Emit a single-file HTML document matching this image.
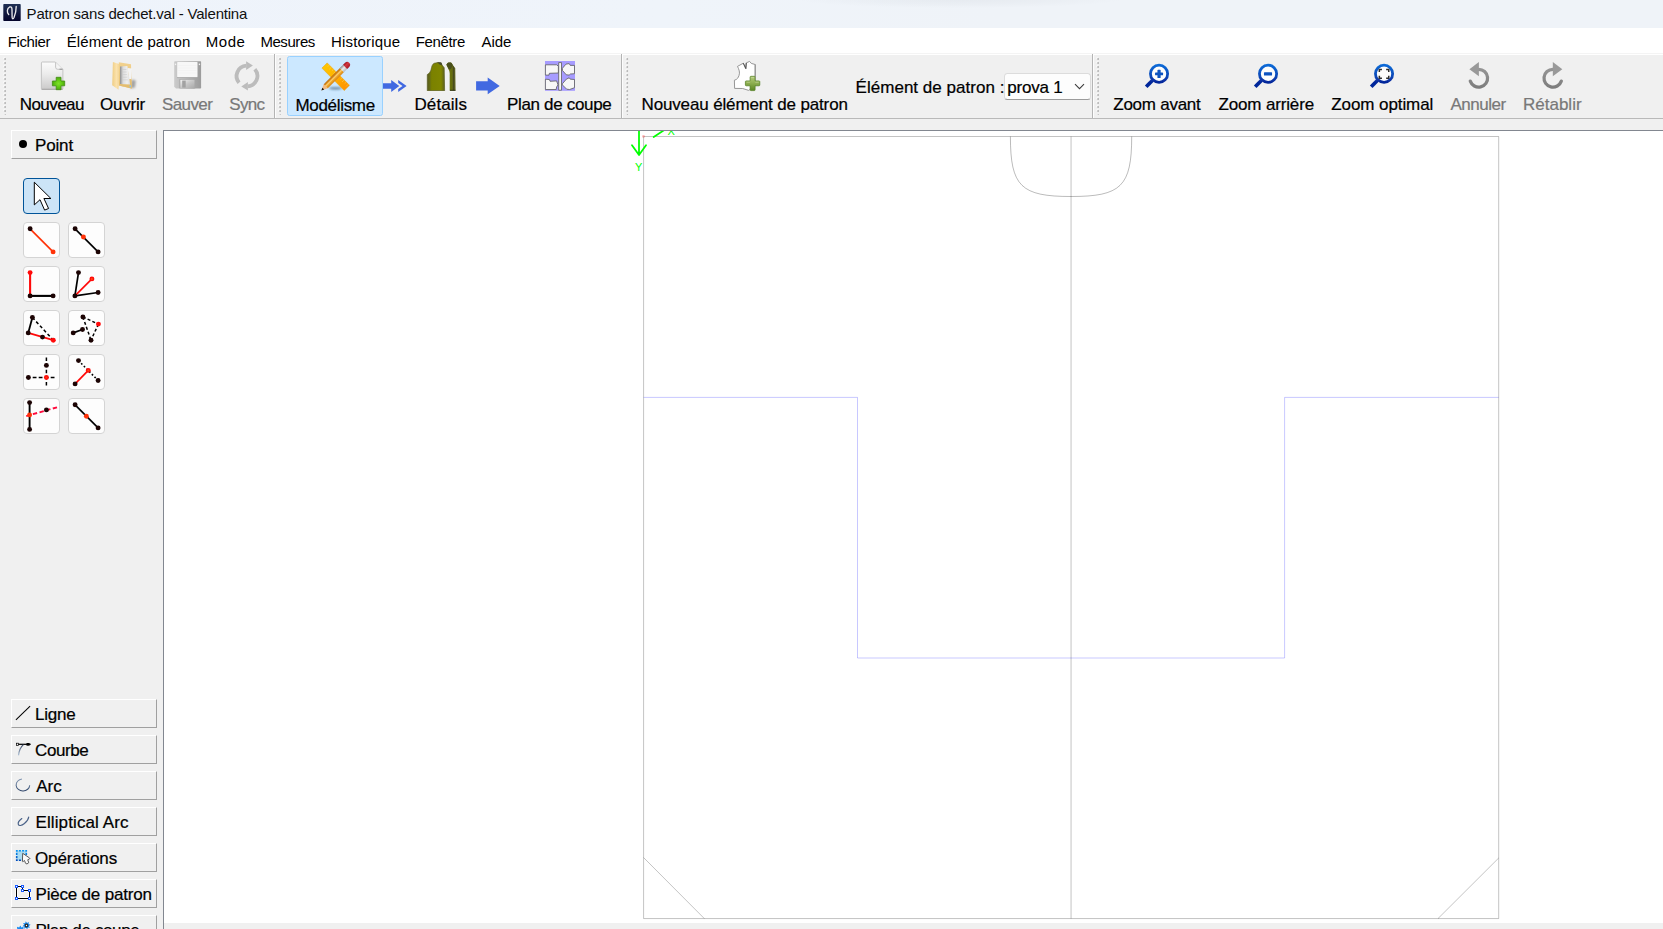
<!DOCTYPE html>
<html lang="fr">
<head>
<meta charset="utf-8">
<title>Patron sans dechet.val - Valentina</title>
<style>
*{box-sizing:border-box;margin:0;padding:0}
html,body{width:1663px;height:929px;overflow:hidden;background:#f0f0f0;font-family:"Liberation Sans","DejaVu Sans",sans-serif;color:#000}
.tx{position:absolute;line-height:24px;white-space:nowrap;z-index:5}
.b{-webkit-text-stroke:0.22px currentColor}
.dis{color:#787878}
svg{position:absolute;overflow:visible}
#title{position:absolute;left:0;top:0;width:1663px;height:28px;background:radial-gradient(ellipse 165px 9px at 960px -1px,rgba(110,118,130,0.075),rgba(110,118,130,0.035) 60%,rgba(110,118,130,0) 100%),linear-gradient(90deg,#eef3fb 0,#eff4fa 40%,#eff3f8 60%,#eff3f8 100%)}
#menubar{position:absolute;left:0;top:28px;width:1663px;height:25px;background:#fff}
#toolbar{position:absolute;left:0;top:53px;width:1663px;height:66px;background:linear-gradient(180deg,#f4f4f4 0,#f4f4f4 1px,#fff 1px,#fff 2px,#f0f0f0 2px);border-bottom:1px solid #b9b9b9}
.handle{position:absolute;top:58px;height:57px;width:3px;background:repeating-linear-gradient(180deg,#bdbdbd 0,#bdbdbd 1px,#f7f7f7 1px,#f7f7f7 2px,#f0f0f0 2px,#f0f0f0 3px)}
.sep{position:absolute;top:56px;height:61px;width:2px;border-left:1px solid #c3c3c3;border-right:1px solid #fbfbfb}
.chk{position:absolute;background:#cce8ff;border:1px solid #99d1ff;border-radius:2.5px}
.combo{position:absolute;background:#fdfdfd;border:1px solid #dcdcdc;border-bottom-color:#9c9c9c;border-radius:3.5px}
.tab{position:absolute;left:11px;width:146px;height:29px;background:#f0f0f0;border-top:1px solid #fff;border-left:1px solid #fff;border-right:1px solid #a0a0a0;border-bottom:1px solid #a0a0a0}
.dot{position:absolute;left:18.6px;top:139.7px;width:8.6px;height:8.6px;border-radius:50%;background:#000}
.tool{position:absolute;width:37px;height:36px;border:1px solid #d4d4d4;border-radius:4px;background:#fdfdfd}
.tool.sel{border-color:#005499;background:#cce4f7}
#canvas{position:absolute;left:163px;top:130px;width:1500px;height:793px;background:#fff;border-left:1px solid #828790;border-top:1px solid #828790}
#cvl{position:absolute;left:163px;top:923px;width:1px;height:6px;background:#828790}
</style>
</head>
<body>
<div id="title"></div>
<svg style="left:0;top:0;z-index:4" width="28" height="28" viewBox="0 0 28 28">
<defs><linearGradient id="lg" x1="0" y1="0" x2="0" y2="1"><stop offset="0" stop-color="#1e2f54"/><stop offset="1" stop-color="#04042c"/></linearGradient></defs>
<rect x="3.3" y="4" width="17.4" height="17" rx="0.8" fill="url(#lg)"/>
<path d="M8.7 14.5C6.7 12.5 6.9 8.4 9.6 7C11.5 6.3 12 7.8 12 10L12.1 17.3C12.2 19.2 13.2 19.2 14 17.5C15.5 14 16.2 10.2 16.2 6.5" fill="none" stroke="#e9e9ec" stroke-width="1.35" stroke-linecap="round" stroke-linejoin="round"/>
</svg>
<span class="tx " style="left:26.6px;top:2px;font-size:15px;letter-spacing:-0.2px;color:#101010">Patron sans dechet.val - Valentina</span>
<div id="menubar"></div>
<span class="tx " style="left:7.75px;top:30px;font-size:15px;letter-spacing:-0.375px">Fichier</span>
<span class="tx " style="left:66.8px;top:30px;font-size:15px;letter-spacing:0.056px">Élément de patron</span>
<span class="tx " style="left:205.7px;top:30px;font-size:15px;letter-spacing:0.567px">Mode</span>
<span class="tx " style="left:260.4px;top:30px;font-size:15px;letter-spacing:-0.433px">Mesures</span>
<span class="tx " style="left:331.0px;top:30px;font-size:15px;letter-spacing:0.167px">Historique</span>
<span class="tx " style="left:415.7px;top:30px;font-size:15px;letter-spacing:-0.35px">Fenêtre</span>
<span class="tx " style="left:481.5px;top:30px;font-size:15px;letter-spacing:-0.033px">Aide</span>
<div id="toolbar"></div>
<svg style="left:0;top:54px;z-index:2" width="1663" height="66" viewBox="0 54 1663 66">
<circle cx="4.21" cy="58.15" r="0.95" fill="#fcfcfc"/>
<circle cx="4.21" cy="62.15" r="0.95" fill="#fcfcfc"/>
<circle cx="4.21" cy="66.15" r="0.95" fill="#fcfcfc"/>
<circle cx="4.21" cy="70.15" r="0.95" fill="#fcfcfc"/>
<circle cx="4.21" cy="74.15" r="0.95" fill="#fcfcfc"/>
<circle cx="4.21" cy="78.15" r="0.95" fill="#fcfcfc"/>
<circle cx="4.21" cy="82.15" r="0.95" fill="#fcfcfc"/>
<circle cx="4.21" cy="86.15" r="0.95" fill="#fcfcfc"/>
<circle cx="4.21" cy="90.15" r="0.95" fill="#fcfcfc"/>
<circle cx="4.21" cy="94.15" r="0.95" fill="#fcfcfc"/>
<circle cx="4.21" cy="98.15" r="0.95" fill="#fcfcfc"/>
<circle cx="4.21" cy="102.15" r="0.95" fill="#fcfcfc"/>
<circle cx="4.21" cy="106.15" r="0.95" fill="#fcfcfc"/>
<circle cx="4.21" cy="110.15" r="0.95" fill="#fcfcfc"/>
<ellipse cx="5.11" cy="59.05" rx="0.95" ry="0.8" fill="#999"/>
<ellipse cx="5.11" cy="63.05" rx="0.95" ry="0.8" fill="#999"/>
<ellipse cx="5.11" cy="67.05" rx="0.95" ry="0.8" fill="#999"/>
<ellipse cx="5.11" cy="71.05" rx="0.95" ry="0.8" fill="#999"/>
<ellipse cx="5.11" cy="75.05" rx="0.95" ry="0.8" fill="#999"/>
<ellipse cx="5.11" cy="79.05" rx="0.95" ry="0.8" fill="#999"/>
<ellipse cx="5.11" cy="83.05" rx="0.95" ry="0.8" fill="#999"/>
<ellipse cx="5.11" cy="87.05" rx="0.95" ry="0.8" fill="#999"/>
<ellipse cx="5.11" cy="91.05" rx="0.95" ry="0.8" fill="#999"/>
<ellipse cx="5.11" cy="95.05" rx="0.95" ry="0.8" fill="#999"/>
<ellipse cx="5.11" cy="99.05" rx="0.95" ry="0.8" fill="#999"/>
<ellipse cx="5.11" cy="103.05" rx="0.95" ry="0.8" fill="#999"/>
<ellipse cx="5.11" cy="107.05" rx="0.95" ry="0.8" fill="#999"/>
<ellipse cx="5.11" cy="111.05" rx="0.95" ry="0.8" fill="#999"/>
<circle cx="5.26" cy="114.5" r="0.6" fill="#b4b4b4"/>
<circle cx="279.15" cy="58.15" r="0.95" fill="#fcfcfc"/>
<circle cx="279.15" cy="62.15" r="0.95" fill="#fcfcfc"/>
<circle cx="279.15" cy="66.15" r="0.95" fill="#fcfcfc"/>
<circle cx="279.15" cy="70.15" r="0.95" fill="#fcfcfc"/>
<circle cx="279.15" cy="74.15" r="0.95" fill="#fcfcfc"/>
<circle cx="279.15" cy="78.15" r="0.95" fill="#fcfcfc"/>
<circle cx="279.15" cy="82.15" r="0.95" fill="#fcfcfc"/>
<circle cx="279.15" cy="86.15" r="0.95" fill="#fcfcfc"/>
<circle cx="279.15" cy="90.15" r="0.95" fill="#fcfcfc"/>
<circle cx="279.15" cy="94.15" r="0.95" fill="#fcfcfc"/>
<circle cx="279.15" cy="98.15" r="0.95" fill="#fcfcfc"/>
<circle cx="279.15" cy="102.15" r="0.95" fill="#fcfcfc"/>
<circle cx="279.15" cy="106.15" r="0.95" fill="#fcfcfc"/>
<circle cx="279.15" cy="110.15" r="0.95" fill="#fcfcfc"/>
<ellipse cx="280.05" cy="59.05" rx="0.95" ry="0.8" fill="#999"/>
<ellipse cx="280.05" cy="63.05" rx="0.95" ry="0.8" fill="#999"/>
<ellipse cx="280.05" cy="67.05" rx="0.95" ry="0.8" fill="#999"/>
<ellipse cx="280.05" cy="71.05" rx="0.95" ry="0.8" fill="#999"/>
<ellipse cx="280.05" cy="75.05" rx="0.95" ry="0.8" fill="#999"/>
<ellipse cx="280.05" cy="79.05" rx="0.95" ry="0.8" fill="#999"/>
<ellipse cx="280.05" cy="83.05" rx="0.95" ry="0.8" fill="#999"/>
<ellipse cx="280.05" cy="87.05" rx="0.95" ry="0.8" fill="#999"/>
<ellipse cx="280.05" cy="91.05" rx="0.95" ry="0.8" fill="#999"/>
<ellipse cx="280.05" cy="95.05" rx="0.95" ry="0.8" fill="#999"/>
<ellipse cx="280.05" cy="99.05" rx="0.95" ry="0.8" fill="#999"/>
<ellipse cx="280.05" cy="103.05" rx="0.95" ry="0.8" fill="#999"/>
<ellipse cx="280.05" cy="107.05" rx="0.95" ry="0.8" fill="#999"/>
<ellipse cx="280.05" cy="111.05" rx="0.95" ry="0.8" fill="#999"/>
<circle cx="280.20" cy="114.5" r="0.6" fill="#b4b4b4"/>
<circle cx="626.35" cy="58.15" r="0.95" fill="#fcfcfc"/>
<circle cx="626.35" cy="62.15" r="0.95" fill="#fcfcfc"/>
<circle cx="626.35" cy="66.15" r="0.95" fill="#fcfcfc"/>
<circle cx="626.35" cy="70.15" r="0.95" fill="#fcfcfc"/>
<circle cx="626.35" cy="74.15" r="0.95" fill="#fcfcfc"/>
<circle cx="626.35" cy="78.15" r="0.95" fill="#fcfcfc"/>
<circle cx="626.35" cy="82.15" r="0.95" fill="#fcfcfc"/>
<circle cx="626.35" cy="86.15" r="0.95" fill="#fcfcfc"/>
<circle cx="626.35" cy="90.15" r="0.95" fill="#fcfcfc"/>
<circle cx="626.35" cy="94.15" r="0.95" fill="#fcfcfc"/>
<circle cx="626.35" cy="98.15" r="0.95" fill="#fcfcfc"/>
<circle cx="626.35" cy="102.15" r="0.95" fill="#fcfcfc"/>
<circle cx="626.35" cy="106.15" r="0.95" fill="#fcfcfc"/>
<circle cx="626.35" cy="110.15" r="0.95" fill="#fcfcfc"/>
<ellipse cx="627.25" cy="59.05" rx="0.95" ry="0.8" fill="#999"/>
<ellipse cx="627.25" cy="63.05" rx="0.95" ry="0.8" fill="#999"/>
<ellipse cx="627.25" cy="67.05" rx="0.95" ry="0.8" fill="#999"/>
<ellipse cx="627.25" cy="71.05" rx="0.95" ry="0.8" fill="#999"/>
<ellipse cx="627.25" cy="75.05" rx="0.95" ry="0.8" fill="#999"/>
<ellipse cx="627.25" cy="79.05" rx="0.95" ry="0.8" fill="#999"/>
<ellipse cx="627.25" cy="83.05" rx="0.95" ry="0.8" fill="#999"/>
<ellipse cx="627.25" cy="87.05" rx="0.95" ry="0.8" fill="#999"/>
<ellipse cx="627.25" cy="91.05" rx="0.95" ry="0.8" fill="#999"/>
<ellipse cx="627.25" cy="95.05" rx="0.95" ry="0.8" fill="#999"/>
<ellipse cx="627.25" cy="99.05" rx="0.95" ry="0.8" fill="#999"/>
<ellipse cx="627.25" cy="103.05" rx="0.95" ry="0.8" fill="#999"/>
<ellipse cx="627.25" cy="107.05" rx="0.95" ry="0.8" fill="#999"/>
<ellipse cx="627.25" cy="111.05" rx="0.95" ry="0.8" fill="#999"/>
<circle cx="627.40" cy="114.5" r="0.6" fill="#b4b4b4"/>
<circle cx="1097.21" cy="58.15" r="0.95" fill="#fcfcfc"/>
<circle cx="1097.21" cy="62.15" r="0.95" fill="#fcfcfc"/>
<circle cx="1097.21" cy="66.15" r="0.95" fill="#fcfcfc"/>
<circle cx="1097.21" cy="70.15" r="0.95" fill="#fcfcfc"/>
<circle cx="1097.21" cy="74.15" r="0.95" fill="#fcfcfc"/>
<circle cx="1097.21" cy="78.15" r="0.95" fill="#fcfcfc"/>
<circle cx="1097.21" cy="82.15" r="0.95" fill="#fcfcfc"/>
<circle cx="1097.21" cy="86.15" r="0.95" fill="#fcfcfc"/>
<circle cx="1097.21" cy="90.15" r="0.95" fill="#fcfcfc"/>
<circle cx="1097.21" cy="94.15" r="0.95" fill="#fcfcfc"/>
<circle cx="1097.21" cy="98.15" r="0.95" fill="#fcfcfc"/>
<circle cx="1097.21" cy="102.15" r="0.95" fill="#fcfcfc"/>
<circle cx="1097.21" cy="106.15" r="0.95" fill="#fcfcfc"/>
<circle cx="1097.21" cy="110.15" r="0.95" fill="#fcfcfc"/>
<ellipse cx="1098.11" cy="59.05" rx="0.95" ry="0.8" fill="#999"/>
<ellipse cx="1098.11" cy="63.05" rx="0.95" ry="0.8" fill="#999"/>
<ellipse cx="1098.11" cy="67.05" rx="0.95" ry="0.8" fill="#999"/>
<ellipse cx="1098.11" cy="71.05" rx="0.95" ry="0.8" fill="#999"/>
<ellipse cx="1098.11" cy="75.05" rx="0.95" ry="0.8" fill="#999"/>
<ellipse cx="1098.11" cy="79.05" rx="0.95" ry="0.8" fill="#999"/>
<ellipse cx="1098.11" cy="83.05" rx="0.95" ry="0.8" fill="#999"/>
<ellipse cx="1098.11" cy="87.05" rx="0.95" ry="0.8" fill="#999"/>
<ellipse cx="1098.11" cy="91.05" rx="0.95" ry="0.8" fill="#999"/>
<ellipse cx="1098.11" cy="95.05" rx="0.95" ry="0.8" fill="#999"/>
<ellipse cx="1098.11" cy="99.05" rx="0.95" ry="0.8" fill="#999"/>
<ellipse cx="1098.11" cy="103.05" rx="0.95" ry="0.8" fill="#999"/>
<ellipse cx="1098.11" cy="107.05" rx="0.95" ry="0.8" fill="#999"/>
<ellipse cx="1098.11" cy="111.05" rx="0.95" ry="0.8" fill="#999"/>
<circle cx="1098.26" cy="114.5" r="0.6" fill="#b4b4b4"/>
<rect x="274" y="54" width="1" height="64" fill="#b4b4b4"/><rect x="275" y="55" width="1" height="63" fill="#fdfdfd"/>
<rect x="621" y="54" width="1" height="64" fill="#b4b4b4"/><rect x="622" y="55" width="1" height="63" fill="#fdfdfd"/>
<rect x="1092" y="54" width="1" height="64" fill="#b4b4b4"/><rect x="1093" y="55" width="1" height="63" fill="#fdfdfd"/>
</svg>
<div class="chk" style="left:287px;top:56px;width:96px;height:60px"></div>
<div class="combo" style="left:1004px;top:73px;width:87px;height:27px"></div>
<span class="tx  b" style="left:19.7px;top:93px;font-size:17px;letter-spacing:-0.55px">Nouveau</span>
<span class="tx  b" style="left:100.0px;top:93px;font-size:17px;letter-spacing:-0.24px">Ouvrir</span>
<span class="tx dis b" style="left:162.0px;top:93px;font-size:17px;letter-spacing:-0.6px">Sauver</span>
<span class="tx dis b" style="left:229.3px;top:93px;font-size:17px;letter-spacing:-0.667px">Sync</span>
<span class="tx  b" style="left:295.4px;top:94px;font-size:17px;letter-spacing:-0.3px">Modélisme</span>
<span class="tx  b" style="left:414.5px;top:93px;font-size:17px;letter-spacing:0.083px">Détails</span>
<span class="tx  b" style="left:507.0px;top:93px;font-size:17px;letter-spacing:-0.333px">Plan de coupe</span>
<span class="tx  b" style="left:641.5px;top:93px;font-size:17px;letter-spacing:-0.142px">Nouveau élément de patron</span>
<span class="tx  b" style="left:855.6px;top:76px;font-size:17px;letter-spacing:0.022px">Élément de patron :</span>
<span class="tx  b" style="left:1007.2px;top:76px;font-size:17px;letter-spacing:-0.2px">prova 1</span>
<span class="tx  b" style="left:1113.3px;top:93px;font-size:17px;letter-spacing:-0.256px">Zoom avant</span>
<span class="tx  b" style="left:1218.5px;top:93px;font-size:17px;letter-spacing:-0.155px">Zoom arrière</span>
<span class="tx  b" style="left:1331.3px;top:93px;font-size:17px;letter-spacing:-0.091px">Zoom optimal</span>
<span class="tx dis b" style="left:1450.5px;top:93px;font-size:17px;letter-spacing:-0.483px">Annuler</span>
<span class="tx dis b" style="left:1523.0px;top:93px;font-size:17px;letter-spacing:0.0px">Rétablir</span>
<svg style="left:30px;top:56px;z-index:4" width="50" height="40" viewBox="30 56 50 40">
<defs>
<linearGradient id="docg" x1="0" y1="0" x2="0" y2="1"><stop offset="0" stop-color="#fcfcfc"/><stop offset="0.45" stop-color="#ebebeb"/><stop offset="1" stop-color="#cbcaca"/></linearGradient>
<radialGradient id="plusg" cx="0.5" cy="0.5" r="0.6"><stop offset="0" stop-color="#7fe02a"/><stop offset="0.5" stop-color="#5fc812"/><stop offset="1" stop-color="#459412"/></radialGradient>
</defs>
<path d="M42.3 62H55.3L62.9 69.6V88.4Q62.9 89.3 62 89.3H42.3Q41.4 89.3 41.4 88.4V62.9Q41.4 62 42.3 62Z" fill="url(#docg)" stroke="#c4c4c4" stroke-width="1"/>
<path d="M41.6 89.3H62.6" stroke="#a9a8a8" stroke-width="1.1"/>
<path d="M55.6 62.4V67.2Q55.6 69.3 57.8 69.3H62.6" fill="#f4f4f4" stroke="#bdbdbd" stroke-width="0.9"/>
<path d="M59.5 69.2h3" stroke="#8c8c8c" stroke-width="0.9"/>
<path d="M56.2 77.3H61V81H64.7V85.8H61V89.7H56.2V85.8H52.4V81H56.2Z" fill="url(#plusg)" stroke="#438f12" stroke-width="0.8" stroke-linejoin="round"/>
</svg>
<svg style="left:100px;top:56px;z-index:4" width="50" height="40" viewBox="100 56 50 40">
<defs>
<linearGradient id="fo1" x1="0" y1="0" x2="1" y2="0"><stop offset="0" stop-color="#efcd83"/><stop offset="0.6" stop-color="#fbe2ad"/><stop offset="1" stop-color="#f3d594"/></linearGradient>
<linearGradient id="fo2" x1="0" y1="0" x2="0" y2="1"><stop offset="0" stop-color="#f2d28f"/><stop offset="1" stop-color="#e3bb6a"/></linearGradient>
<linearGradient id="fo3" x1="0" y1="0" x2="1" y2="0"><stop offset="0" stop-color="#8e8e8e"/><stop offset="0.3" stop-color="#dcdcdc"/><stop offset="0.7" stop-color="#efefef"/><stop offset="1" stop-color="#d8d8d8"/></linearGradient>
<filter id="bl1" x="-20%" y="-20%" width="140%" height="140%"><feGaussianBlur stdDeviation="0.35"/></filter>
<filter id="bl2" x="-50%" y="-50%" width="200%" height="200%"><feGaussianBlur stdDeviation="1.1"/></filter>
</defs>
<path d="M131.5 79.5L135.8 80.6L135 87.5L130.5 88.6Z" fill="#000" fill-opacity="0.33" filter="url(#bl2)"/>
<g filter="url(#bl1)">
<path d="M118.8 62.3L131 64.3L131.7 88.6L118.8 85.6Z" fill="url(#fo2)"/>
<path d="M127.6 67.9L132 68.5L131.1 79L129 79Z" fill="#f3f3f3"/>
<path d="M120 66.4L127.4 66L130.2 84.6L120 84.1Z" fill="url(#fo3)"/>
<path d="M121.8 69.5h4.6M121.9 72h4.8M122 74.6h5M122.1 77.2h5.3M122.2 79.8h5.6" stroke="#c9c9c9" stroke-width="0.6"/>
<path d="M119.2 85.2L130.6 87.4L130.4 80L131.4 79.5L131.7 88.6L118.8 85.6Z" fill="#e4bd70"/>
<path d="M129.6 85.2h1.4v2h-1.4z" fill="#8cc4ea"/>
<path d="M112.9 62L119.2 64V79L118.5 89.8L112.2 85.2Z" fill="url(#fo1)"/>
</g>
</svg>
<svg style="left:165px;top:56px;z-index:4" width="50" height="40" viewBox="165 56 50 40">
<defs>
<linearGradient id="sv1" x1="0" y1="0" x2="1" y2="0"><stop offset="0" stop-color="#cbcbcb"/><stop offset="0.5" stop-color="#b4b4b4"/><stop offset="1" stop-color="#9b9b9b"/></linearGradient>
<linearGradient id="sv2" x1="0" y1="0" x2="1" y2="1"><stop offset="0" stop-color="#f4f4f4"/><stop offset="0.5" stop-color="#c6c6c6"/><stop offset="1" stop-color="#a9a9a9"/></linearGradient>
<filter id="bl3" x="-20%" y="-20%" width="140%" height="140%"><feGaussianBlur stdDeviation="0.3"/></filter>
</defs>
<g filter="url(#bl3)">
<path d="M175 61.3H200.4Q201.1 61.3 201.1 62V87.7Q201.1 88.4 200.4 88.4H176L174.2 86.8V62Q174.2 61.3 175 61.3Z" fill="url(#sv1)"/>
<rect x="177.2" y="61.9" width="20.3" height="15.3" rx="0.6" fill="#f7f7f7"/>
<path d="M178 65.5h18.5M178 68h18.5M178 70.5h18.5M178 73h18.5" stroke="#efefef" stroke-width="0.5"/>
<path d="M177 77.6H197.6" stroke="#a8a8a8" stroke-width="0.8"/>
<rect x="179.4" y="79.2" width="16" height="9.2" fill="#a6a6a6"/>
<rect x="180.3" y="79.8" width="14.2" height="8.6" fill="url(#sv2)"/>
<rect x="182.2" y="80.6" width="3.5" height="7" fill="#a2a2a2"/>
<rect x="174.9" y="63.6" width="1.3" height="1.5" fill="#f2f2f2"/>
<rect x="198.8" y="63.6" width="1.3" height="1.5" fill="#f2f2f2"/>
</g>
</svg>
<svg style="left:222px;top:56px;z-index:4" width="50" height="40" viewBox="222 56 50 40">
<defs><filter id="bl4" x="-20%" y="-20%" width="140%" height="140%"><feGaussianBlur stdDeviation="0.3"/></filter></defs>
<g filter="url(#bl4)" fill="#bcbcbc">
<path d="M239.03 82.68A10.4 10.4 0 0 1 246.27 65.63" fill="none" stroke="#bcbcbc" stroke-width="3.8"/>
<path d="M254.85 69.18A10.4 10.4 0 0 1 247.73 86.37" fill="none" stroke="#bcbcbc" stroke-width="3.8"/>
<path d="M246.1 61.3L252.9 65.5L246.1 69.9Z"/>
<path d="M247.9 81.9L241.3 86.4L247.9 90.6Z"/>
</g>
</svg>
<svg style="left:310px;top:57px;z-index:4" width="50" height="39" viewBox="310 57 50 39">
<defs>
<linearGradient id="rul" x1="0" y1="0" x2="1" y2="0"><stop offset="0" stop-color="#ffc600"/><stop offset="0.45" stop-color="#ffb400"/><stop offset="1" stop-color="#ff9200"/></linearGradient>
<linearGradient id="pen" x1="0" y1="0" x2="0" y2="1"><stop offset="0" stop-color="#b86a10"/><stop offset="0.25" stop-color="#d98a1c"/><stop offset="0.45" stop-color="#fcd57c"/><stop offset="0.62" stop-color="#f2ac34"/><stop offset="1" stop-color="#d7820c"/></linearGradient>
<linearGradient id="fer" x1="0" y1="0" x2="0" y2="1"><stop offset="0" stop-color="#8a8a8a"/><stop offset="0.45" stop-color="#ededed"/><stop offset="1" stop-color="#b8b8b8"/></linearGradient>
<linearGradient id="era" x1="0" y1="0" x2="0" y2="1"><stop offset="0" stop-color="#a01522"/><stop offset="0.4" stop-color="#d3363f"/><stop offset="1" stop-color="#a81a26"/></linearGradient>
<filter id="bl5" x="-20%" y="-20%" width="140%" height="140%"><feGaussianBlur stdDeviation="0.3"/></filter>
<filter id="bl6" x="-50%" y="-100%" width="200%" height="300%"><feGaussianBlur stdDeviation="1.2"/></filter>
</defs>
<ellipse cx="335.5" cy="88.3" rx="6.5" ry="1.4" fill="#24415f" fill-opacity="0.55" filter="url(#bl6)"/>
<g filter="url(#bl5)">
<g transform="translate(327.2 62.9) rotate(45.2)">
<rect x="0" y="0" width="31.6" height="7.4" fill="url(#rul)" stroke="#eb9d00" stroke-width="0.5"/>
<path d="M3 0v2.2M6 0v3M9 0v2.2M12 0v3M21 0v2.2M24 0v3M27 0v2.2M30 0v3" stroke="#ffd870" stroke-width="0.6" opacity="0.7"/>
</g>
<g transform="translate(321.4 90.6) rotate(-45)">
<path d="M0 0L6.3 -2.9V2.9Z" fill="#f2b983"/>
<path d="M0 0L2.7 -1.25V1.25Z" fill="#1a1208"/>
<rect x="6.2" y="-2.9" width="22.9" height="5.8" fill="url(#pen)"/>
<rect x="28.9" y="-2.9" width="4.8" height="5.8" fill="url(#fer)"/>
<path d="M33.5 -2.9H36.4Q39.3 -2.9 39.3 0Q39.3 2.9 36.4 2.9H33.5Z" fill="url(#era)"/>
</g>
</g>
</svg>
<svg style="left:383px;top:76px;z-index:4" width="28" height="20" viewBox="383 76 28 20">
<path d="M383 83.3H391.2V80.1L399.3 86L391.2 92V88.7H383Z" fill="#4169e1"/>
<path d="M398.2 80.1L406.6 86L398.2 92V89.1L402.5 86L398.2 82.9Z" fill="#4169e1"/>
</svg>
<svg style="left:420px;top:58px;z-index:4" width="44" height="38" viewBox="420 58 44 38">
<defs>
<linearGradient id="dt1" gradientUnits="userSpaceOnUse" x1="427" y1="0" x2="445" y2="0"><stop offset="0" stop-color="#55591c"/><stop offset="0.14" stop-color="#646a14"/><stop offset="0.26" stop-color="#7a8104"/><stop offset="0.78" stop-color="#808600"/><stop offset="0.9" stop-color="#6a6e14"/><stop offset="1" stop-color="#5c5e22"/></linearGradient>
<linearGradient id="dt2" gradientUnits="userSpaceOnUse" x1="449.5" y1="0" x2="456" y2="0"><stop offset="0" stop-color="#6a7212"/><stop offset="0.42" stop-color="#646c10"/><stop offset="0.62" stop-color="#474b1a"/><stop offset="0.8" stop-color="#5c6024"/><stop offset="1" stop-color="#8b8f55"/></linearGradient>
<filter id="bl7" x="-20%" y="-20%" width="140%" height="140%"><feGaussianBlur stdDeviation="0.38"/></filter>
</defs>
<g filter="url(#bl7)">
<path d="M427.3 90.7V74.6C429.6 73.2 430.6 71.4 431.2 69.2C431.8 66.8 432 64.4 434.2 63.3L438.2 62.5L441.1 62.9L442 65L444.2 67.7L444.6 90.7Z" fill="url(#dt1)" stroke="#595c22" stroke-width="0.7"/>
<path d="M437.2 62.2L441.4 62.6L442.2 65.4L439.6 64.4Z" fill="#45472a"/>
<path d="M446.4 64.8C447 63.4 447.8 62.7 448.6 62.5H450.8C452 63.2 452.4 64.2 452.8 65.1L455.3 68.2L455.7 90.7H449.7V73.4C449.6 71.4 449.2 70.2 448.4 68.9Z" fill="url(#dt2)"/>
<path d="M446.4 64.8C447 63.4 447.8 62.7 448.6 62.5H450.8C452 63.2 452.4 64.2 452.8 65.1L451 69L449 69.4Z" fill="#4a4f1c"/>
<path d="M450 90.3h5.4" stroke="#30331a" stroke-width="0.9"/>
<path d="M427 91.5h17.8M449.4 91.5h6.6" stroke="#fbfbfb" stroke-width="0.7"/>
</g>
</svg>
<svg style="left:470px;top:56px;z-index:4" width="120" height="40" viewBox="470 56 120 40">
<path d="M476.1 81.3H487.7V77.6L499.7 86L487.7 94.3V90.6H476.1Z" fill="#4169e1"/>
<rect x="545" y="61" width="30" height="29.8" fill="#a79cff"/>
<g fill="#f7f7f7" stroke="#5c5c5c" stroke-width="0.8" stroke-linejoin="round">
<path d="M545.4 64.8 L556.6 64.8 L558.4 66.2 L558.4 73.0 L549.4 73.3 L549.0 75.1 L545.4 75.1Z"/>
<path d="M545.4 79.2 L549.4 79.5 L550.1 81.3 L556.6 80.9 L558.0 84.9 L556.6 87.0 L556.2 89.5 L545.4 89.5Z"/>
<path d="M558.7 62.6 L561.5 62.6 L561.5 90.2 L558.7 90.2Z"/>
<path d="M562.4 68.3 L566.0 64.1 L569.2 63.6 L570.3 65.4 L574.5 65.4 L574.5 73.7 L570.3 74.0 L569.2 75.1 L566.3 74.8 L562.4 70.4Z"/>
<path d="M562.4 83.8 L566.3 79.2 L569.2 77.8 L570.3 79.2 L574.5 79.5 L574.5 87.7 L569.6 89.5 L566.7 89.2 L562.4 84.9Z"/>
</g>
</svg>
<svg style="left:722px;top:56px;z-index:4" width="50" height="40" viewBox="722 56 50 40">
<defs>
<linearGradient id="pp1" x1="0" y1="0" x2="0" y2="1"><stop offset="0" stop-color="#b4cb7c"/><stop offset="0.45" stop-color="#8fb052"/><stop offset="1" stop-color="#5a8622"/></linearGradient>
<filter id="bl8" x="-20%" y="-20%" width="140%" height="140%"><feGaussianBlur stdDeviation="0.3"/></filter>
</defs>
<g filter="url(#bl8)">
<path d="M737.5 66.4L743.3 63.2L745.8 68.6L746.3 62.9L749.6 61.4L751.3 63.4L755.2 64.5V86L748.7 90.4L742.7 88.5L734.6 88.4L734.4 80.2C737.3 79.6 738.2 77.6 739 75.5C740.2 72.4 739 69.4 737.5 66.4Z" fill="#fff" stroke="#8c8c8c" stroke-width="0.9" stroke-linejoin="round"/>
<path d="M743.3 63.2L745.8 68.6L746.3 62.9" fill="none" stroke="#4a4a4a" stroke-width="0.9" stroke-linejoin="round"/>
<path d="M755.3 64.6V77" stroke="#9b9b9b" stroke-width="1.3"/>
<path d="M750.9 76.3H754.3Q755.1 76.3 755.1 77.1V80.9H759Q759.8 80.9 759.8 81.7V85Q759.8 85.8 759 85.8H755.1V89.8Q755.1 90.6 754.3 90.6H750.9Q750.1 90.6 750.1 89.8V85.8H746.2Q745.4 85.8 745.4 85V81.7Q745.4 80.9 746.2 80.9H750.1V77.1Q750.1 76.3 750.9 76.3Z" fill="url(#pp1)" stroke="#507c20" stroke-width="0.7"/>
<path d="M751.2 77.6h2.8M746.6 82.2h3.4M755.3 82.2h3.4" stroke="#d4e2b0" stroke-width="0.6" opacity="0.85"/>
</g>
</svg>
<svg style="left:1070px;top:78px;z-index:6" width="20" height="16" viewBox="1070 78 20 16"><path d="M1075 84.2L1079.5 88.7L1084 84.2" fill="none" stroke="#3c3c3c" stroke-width="1.05"/></svg>
<svg style="left:1132px;top:56px;z-index:4" width="50" height="40" viewBox="1132 56 50 40">
<defs><linearGradient id="mgzoomin" gradientUnits="userSpaceOnUse" x1="0" y1="63" x2="0" y2="89"><stop offset="0" stop-color="#0a6fdc"/><stop offset="0.5" stop-color="#0a49b8"/><stop offset="0.75" stop-color="#06259a"/><stop offset="1" stop-color="#062a9c"/></linearGradient>
<filter id="blmzoomin" x="-20%" y="-20%" width="140%" height="140%"><feGaussianBlur stdDeviation="0.32"/></filter></defs>
<g filter="url(#blmzoomin)">
<path d="M1146.20 86.8L1152.60 80.2" stroke="url(#mgzoomin)" stroke-width="3.7" fill="none"/>
<circle cx="1159.05" cy="73.74" r="8.6" fill="#fdfdfd" stroke="url(#mgzoomin)" stroke-width="2.8"/>
<rect x="1155.05" y="72.54" width="8" height="2.7" rx="0.6" fill="#0a52c0"/><rect x="1157.45" y="69.79" width="3.2" height="8.2" rx="0.6" fill="#0a52c0"/>
</g>
</svg>
<svg style="left:1241px;top:56px;z-index:4" width="50" height="40" viewBox="1241 56 50 40">
<defs><linearGradient id="mgzoomout" gradientUnits="userSpaceOnUse" x1="0" y1="63" x2="0" y2="89"><stop offset="0" stop-color="#0a6fdc"/><stop offset="0.5" stop-color="#0a49b8"/><stop offset="0.75" stop-color="#06259a"/><stop offset="1" stop-color="#062a9c"/></linearGradient>
<filter id="blmzoomout" x="-20%" y="-20%" width="140%" height="140%"><feGaussianBlur stdDeviation="0.32"/></filter></defs>
<g filter="url(#blmzoomout)">
<path d="M1255.20 86.8L1261.60 80.2" stroke="url(#mgzoomout)" stroke-width="3.7" fill="none"/>
<circle cx="1268.05" cy="73.74" r="8.6" fill="#fdfdfd" stroke="url(#mgzoomout)" stroke-width="2.8"/>
<rect x="1263.95" y="72.24" width="8.1" height="3.3" rx="0.6" fill="#0a52c0"/>
</g>
</svg>
<svg style="left:1357px;top:56px;z-index:4" width="50" height="40" viewBox="1357 56 50 40">
<defs><linearGradient id="mgzoomfit" gradientUnits="userSpaceOnUse" x1="0" y1="63" x2="0" y2="89"><stop offset="0" stop-color="#0a6fdc"/><stop offset="0.5" stop-color="#0a49b8"/><stop offset="0.75" stop-color="#06259a"/><stop offset="1" stop-color="#062a9c"/></linearGradient>
<filter id="blmzoomfit" x="-20%" y="-20%" width="140%" height="140%"><feGaussianBlur stdDeviation="0.32"/></filter></defs>
<g filter="url(#blmzoomfit)">
<path d="M1371.20 86.8L1377.60 80.2" stroke="url(#mgzoomfit)" stroke-width="3.7" fill="none"/>
<circle cx="1384.05" cy="73.74" r="8.6" fill="#fdfdfd" stroke="url(#mgzoomfit)" stroke-width="2.8"/>
<path d="M1379.35 72.04V69.44H1381.95M1386.15 69.44H1388.75V72.04M1388.75 75.64V78.24H1386.15M1381.95 78.24H1379.35V75.64" stroke="#2e2e2e" stroke-width="1.5" fill="none"/>
</g>
</svg>
<svg style="left:1455px;top:56px;z-index:4" width="50" height="40" viewBox="1455 56 50 40">
<defs><linearGradient id="ugundo" gradientUnits="userSpaceOnUse" x1="0" y1="62" x2="0" y2="89"><stop offset="0" stop-color="#9d9d9d"/><stop offset="1" stop-color="#7b7b7b"/></linearGradient>
<filter id="bluundo" x="-20%" y="-20%" width="140%" height="140%"><feGaussianBlur stdDeviation="0.3"/></filter></defs>
<g filter="url(#bluundo)">
<path d="M1478.70 69.30A8.9 8.9 0 1 1 1470.28 81.10" fill="none" stroke="url(#ugundo)" stroke-width="3.25" stroke-linecap="round"/>
<path d="M1478.90 61.9L1469.40 69.35L1478.90 76.3Z" fill="#999"/>
</g>
</svg>
<svg style="left:1528px;top:56px;z-index:4" width="50" height="40" viewBox="1528 56 50 40">
<defs><linearGradient id="ugredo" gradientUnits="userSpaceOnUse" x1="0" y1="62" x2="0" y2="89"><stop offset="0" stop-color="#9d9d9d"/><stop offset="1" stop-color="#7b7b7b"/></linearGradient>
<filter id="bluredo" x="-20%" y="-20%" width="140%" height="140%"><feGaussianBlur stdDeviation="0.3"/></filter></defs>
<g filter="url(#bluredo)">
<path d="M1552.90 69.30A8.9 8.9 0 1 0 1561.32 81.10" fill="none" stroke="url(#ugredo)" stroke-width="3.25" stroke-linecap="round"/>
<path d="M1552.80 61.9L1562.30 69.35L1552.80 76.3Z" fill="#999"/>
</g>
</svg>
<div class="tab" style="top:130px"></div><i class="dot"></i>
<span class="tx  b" style="left:35.0px;top:134px;font-size:17px;letter-spacing:-0.15px">Point</span>
<div class="tool sel" style="left:23px;top:178px"></div>
<div class="tool" style="left:23px;top:222px"></div><div class="tool" style="left:68px;top:222px"></div>
<div class="tool" style="left:23px;top:266px"></div><div class="tool" style="left:68px;top:266px"></div>
<div class="tool" style="left:23px;top:310px"></div><div class="tool" style="left:68px;top:310px"></div>
<div class="tool" style="left:23px;top:354px"></div><div class="tool" style="left:68px;top:354px"></div>
<div class="tool" style="left:23px;top:398px"></div><div class="tool" style="left:68px;top:398px"></div>
<svg style="left:18px;top:174px;z-index:4" width="92" height="264" viewBox="18 174 92 264">
<path d="M34.3 182.2V204.9L40 199.7L44.6 210.1L48.6 208.5L43.9 198.5H50.9Z" fill="#fff" stroke="#000" stroke-width="1" stroke-linejoin="miter"/>
<path d="M30.1 228.8L53.1 251.9" stroke="#ff3208" stroke-width="1.7" fill="none"/>
<circle cx="30.1" cy="228.8" r="2.45" fill="#1c0404"/>
<circle cx="53.1" cy="251.9" r="2.45" fill="#ff3208"/>
<path d="M75.1 228.8L98.1 251.9" stroke="#000" stroke-width="1.7" fill="none"/>
<circle cx="75.1" cy="228.8" r="2.45" fill="#1c0404"/>
<circle cx="98.1" cy="251.9" r="2.45" fill="#1c0404"/>
<circle cx="83.4" cy="237" r="2.45" fill="#ff3208"/>
<path d="M30.1 272.6L30.1 295.9" stroke="#ff0a0a" stroke-width="2.1" fill="none"/>
<path d="M30.1 295.9L53.1 295.9" stroke="#000" stroke-width="2.1" fill="none"/>
<circle cx="30.1" cy="272.6" r="2.45" fill="#ff0a0a"/>
<circle cx="30.1" cy="295.9" r="2.45" fill="#1c0404"/>
<circle cx="53.1" cy="295.9" r="2.45" fill="#1c0404"/>
<path d="M74.9 295.9L78.5 272.6" stroke="#000" stroke-width="1.7" fill="none"/>
<path d="M74.9 295.9L98.1 292.5" stroke="#000" stroke-width="1.7" fill="none"/>
<path d="M74.9 295.9L91.9 278.9" stroke="#ff0a0a" stroke-width="1.7" fill="none"/>
<circle cx="78.5" cy="272.6" r="2.45" fill="#1c0404"/>
<circle cx="98.1" cy="292.5" r="2.45" fill="#1c0404"/>
<circle cx="74.9" cy="295.9" r="2.45" fill="#1c0404"/>
<circle cx="91.9" cy="278.9" r="2.45" fill="#ff0a0a"/>
<circle cx="91.9" cy="278.9" r="1" fill="#ff4a10"/>
<path d="M32.4 317.5L53.3 340.2" stroke="#000" stroke-width="1.5" fill="none" stroke-dasharray="3.2 2.4"/>
<path d="M32.4 317.5L28.2 332.9" stroke="#000" stroke-width="1.8" fill="none"/>
<path d="M28.2 332.9L53.3 340.2" stroke="#ff0a0a" stroke-width="1.8" fill="none"/>
<circle cx="32.4" cy="317.5" r="2.45" fill="#1c0404"/>
<circle cx="28.2" cy="332.9" r="2.45" fill="#1c0404"/>
<circle cx="42.5" cy="337.1" r="2.45" fill="#1c0404"/>
<circle cx="53.3" cy="340.2" r="2.45" fill="#ff0a0a"/>
<path d="M82.9 317L98.4 324.1" stroke="#000" stroke-width="1.5" fill="none" stroke-dasharray="3 2.2"/>
<path d="M98.4 324.1L91 340.2" stroke="#000" stroke-width="1.5" fill="none" stroke-dasharray="3 2.2"/>
<path d="M82.9 317L91 340.2" stroke="#000" stroke-width="1.5" fill="none" stroke-dasharray="3 2.2"/>
<path d="M73.2 332.9L82.5 329.5" stroke="#000" stroke-width="1.8" fill="none"/>
<circle cx="82.9" cy="317" r="2.45" fill="#1c0404"/>
<circle cx="91" cy="340.2" r="2.45" fill="#1c0404"/>
<circle cx="82.5" cy="329.5" r="2.45" fill="#1c0404"/>
<circle cx="73.2" cy="332.9" r="2.45" fill="#1c0404"/>
<circle cx="98.4" cy="324.1" r="2.45" fill="#ff0a0a"/>
<path d="M32.7 377.5L54.6 377.5" stroke="#000" stroke-width="1.5" fill="none" stroke-dasharray="3.8 2.2"/>
<path d="M46.4 357.5L46.4 385.6" stroke="#000" stroke-width="1.5" fill="none" stroke-dasharray="3.5 2.6"/>
<circle cx="28.4" cy="377.5" r="2.45" fill="#1c0404"/>
<circle cx="46.4" cy="365.4" r="2.45" fill="#1c0404"/>
<circle cx="46.4" cy="377.5" r="2.45" fill="#ff0a0a"/>
<circle cx="46.4" cy="377.5" r="1" fill="#ff3a10"/>
<path d="M78.5 360.6L98.1 380.5" stroke="#000" stroke-width="1.6" fill="none" stroke-dasharray="1.7 2.1"/>
<path d="M75.1 383.9L88.3 370.4" stroke="#ff0a0a" stroke-width="1.7" fill="none"/>
<circle cx="78.5" cy="360.6" r="2.45" fill="#1c0404"/>
<circle cx="98.1" cy="380.5" r="2.45" fill="#1c0404"/>
<circle cx="75.1" cy="383.9" r="2.45" fill="#1c0404"/>
<circle cx="88.3" cy="370.4" r="2.45" fill="#ff0a0a"/>
<circle cx="88.3" cy="370.4" r="1" fill="#ff4a10"/>
<path d="M29.6 402.6L29.6 429.4" stroke="#000" stroke-width="1.9" fill="none"/>
<path d="M25.1 416.4L57.4 407.2" stroke="#ff0a3c" stroke-width="1.9" fill="none" stroke-dasharray="4.4 2.5" stroke-dashoffset="-1.2"/>
<circle cx="29.6" cy="402.6" r="2.45" fill="#1c0404"/>
<circle cx="29.6" cy="429.4" r="2.45" fill="#1c0404"/>
<circle cx="46.4" cy="409.9" r="2.45" fill="#1c0404"/>
<circle cx="29.6" cy="414.9" r="2.45" fill="#ff3208"/>
<path d="M75.1 404.8L98.1 427.9" stroke="#000" stroke-width="1.7" fill="none"/>
<circle cx="75.1" cy="404.8" r="2.45" fill="#1c0404"/>
<circle cx="98.1" cy="427.9" r="2.45" fill="#1c0404"/>
<circle cx="86.4" cy="416.2" r="2.45" fill="#ff3208"/>
</svg>
<div class="tab" style="top:699px"></div>
<span class="tx  b" style="left:35.0px;top:703px;font-size:17px;letter-spacing:-0.225px">Ligne</span>
<div class="tab" style="top:735px"></div>
<span class="tx  b" style="left:35.0px;top:739px;font-size:17px;letter-spacing:-0.4px">Courbe</span>
<div class="tab" style="top:771px"></div>
<span class="tx  b" style="left:36.3px;top:775px;font-size:17px;letter-spacing:-0.05px">Arc</span>
<div class="tab" style="top:807px"></div>
<span class="tx  b" style="left:35.5px;top:811px;font-size:17px;letter-spacing:0.108px">Elliptical Arc</span>
<div class="tab" style="top:843px"></div>
<span class="tx  b" style="left:35.0px;top:847px;font-size:17px;letter-spacing:-0.111px">Opérations</span>
<div class="tab" style="top:879px"></div>
<span class="tx  b" style="left:35.5px;top:883px;font-size:17px;letter-spacing:-0.193px">Pièce de patron</span>
<div class="tab" style="top:915px"></div>
<span class="tx  b" style="left:35.5px;top:919px;font-size:17px;letter-spacing:-0.375px">Plan de coupe</span>
<svg style="left:8px;top:696px;z-index:6" width="40" height="233" viewBox="8 696 40 233">
<defs>
<linearGradient id="cvg" gradientUnits="userSpaceOnUse" x1="0" y1="744" x2="0" y2="756"><stop offset="0" stop-color="#2c3c5a"/><stop offset="1" stop-color="#b9cbde"/></linearGradient>
<linearGradient id="arg" gradientUnits="userSpaceOnUse" x1="0" y1="778" x2="0" y2="792"><stop offset="0" stop-color="#8a9db8"/><stop offset="0.6" stop-color="#506789"/><stop offset="1" stop-color="#2c4266"/></linearGradient>
<linearGradient id="opg" gradientUnits="userSpaceOnUse" x1="0" y1="850" x2="0" y2="861"><stop offset="0" stop-color="#0c9af4"/><stop offset="1" stop-color="#0048b8"/></linearGradient>
</defs>
<path d="M15.9 719.8L30.1 706.2" stroke="#000" stroke-width="1.05" fill="none"/>
<path d="M17 744.3H30.7" stroke="#000" stroke-width="1.25" fill="none"/>
<rect x="16.4" y="743.2" width="2" height="2.2" fill="#f0f0f0" stroke="#000" stroke-width="0.7"/>
<rect x="26.5" y="743" width="3.1" height="2.7" fill="#000"/>
<path d="M23.4 744.6C20.6 747 19 750.6 18.5 755.4" stroke="url(#cvg)" stroke-width="1.2" fill="none"/>
<path d="M21.95 779.06A6.8 6.0 0 1 0 29.70 785.21" stroke="url(#arg)" stroke-width="1.05" fill="none"/>
<path d="M21.8 818.6C19.5 820.3 17.8 822.6 18.3 824.3C18.9 826.2 21.5 825.8 24.4 823.5C27 821.3 28.5 819 28.7 817" stroke="#4a6288" stroke-width="1.2" fill="none" stroke-linecap="round"/>
<rect x="16.7" y="850.7" width="9.6" height="9.6" fill="#aadcf2"/>
<rect x="16.7" y="850.7" width="9.6" height="9.6" fill="none" stroke="url(#opg)" stroke-width="1.6" stroke-dasharray="2.1 1.1" stroke-dashoffset="1.05"/>
<path d="M22.7 853.3L22.4 861.4Q22.6 862 23.2 861.5L24.5 860.5L25.5 863.2Q25.9 864.1 27 863.8L28 863.4Q28.9 863 28.6 862.1L27.7 859.8L29.5 859Q30.2 858.6 29.6 858Z" fill="#fafafa" stroke="#484848" stroke-width="0.9" stroke-linejoin="round"/>
<path d="M16.5 886.5H22.5V890.5H29.5V898.5H16.5Z" fill="none" stroke="#fff" stroke-width="2.5"/>
<path d="M16.5 886.5H22.5V890.5H29.5V898.5H16.5Z" fill="none" stroke="#000" stroke-width="1"/>
<rect x="15.0" y="885.0" width="3" height="3" fill="#1a5cff"/><rect x="16.0" y="886.0" width="1" height="1" fill="#fff"/>
<rect x="21.0" y="885.0" width="3" height="3" fill="#1a5cff"/><rect x="22.0" y="886.0" width="1" height="1" fill="#fff"/>
<rect x="21.0" y="889.0" width="3" height="3" fill="#1a5cff"/><rect x="22.0" y="890.0" width="1" height="1" fill="#fff"/>
<rect x="28.0" y="889.0" width="3" height="3" fill="#1a5cff"/><rect x="29.0" y="890.0" width="1" height="1" fill="#fff"/>
<rect x="28.0" y="897.0" width="3" height="3" fill="#1a5cff"/><rect x="29.0" y="898.0" width="1" height="1" fill="#fff"/>
<rect x="15.0" y="897.0" width="3" height="3" fill="#1a5cff"/><rect x="16.0" y="898.0" width="1" height="1" fill="#fff"/>
<path d="M25.77 921.26L27.04 922.96L28.91 921.96L28.61 924.06L30.64 924.67L28.94 925.94L29.94 927.81L27.84 927.51L27.23 929.54L25.96 927.84L24.09 928.84L24.39 926.74L22.36 926.13L24.06 924.86L23.06 922.99L25.16 923.29Z" fill="#1a8af0"/>
<circle cx="26.5" cy="925.5" r="1.3" fill="#fff" stroke="#2a2a2a" stroke-width="1.2"/>
<path d="M20.30 925.60L21.47 927.59L23.59 926.67L23.37 928.97L25.63 929.47L24.10 931.20L25.63 932.93L23.37 933.43L23.59 935.73L21.47 934.81L20.30 936.80L19.13 934.81L17.01 935.73L17.23 933.43L14.97 932.93L16.50 931.20L14.97 929.47L17.23 928.97L17.01 926.67L19.13 927.59Z" fill="#1a8af0"/>
</svg>
<div id="canvas"></div><div id="cvl"></div>
<svg style="left:164px;top:131px;z-index:3" width="1499" height="791" viewBox="164 131 1499 791">
<defs><clipPath id="cv"><rect x="164" y="131" width="1499" height="791"/></clipPath></defs>
<g clip-path="url(#cv)" fill="none">
<g stroke="#000" stroke-width="0.24">
<path d="M643.6 136.5H1498.7V918.55H643.6Z"/>
<path d="M1071.06 136.5V918.55"/>
<path d="M643.6 857.6L704.3 918.55M1438 918.55L1498.7 858"/>
<path d="M1010.4 136.5C1010.4 186.5 1021.1 196.5 1071.06 196.5C1121 196.5 1131.7 186.5 1131.7 136.5" stroke-width="0.27"/>
</g>
<path d="M643.6 397.4H857.5V658H1284.6V397.4H1498.7" stroke="#00f" stroke-width="0.22"/>
<circle cx="643.5" cy="136.4" r="1.45" fill="#f00" fill-opacity="0.28"/>
<g stroke="#0f0" stroke-width="1.75" stroke-linecap="round" stroke-linejoin="round">
<path d="M639 130V154.8M632 145.2L639 155.1L646 145.2"/>
<path d="M639 129.8H664.4M653.7 137L664.6 129.8L653.7 122.6"/>
</g>
<text x="635" y="171" font-size="11" fill="#0f0" stroke="none" font-family="Liberation Sans,sans-serif">Y</text>
<text x="667.6" y="134.6" font-size="11" fill="#0f0" stroke="none" font-family="Liberation Sans,sans-serif">X</text>
</g>
</svg>
</body>
</html>
